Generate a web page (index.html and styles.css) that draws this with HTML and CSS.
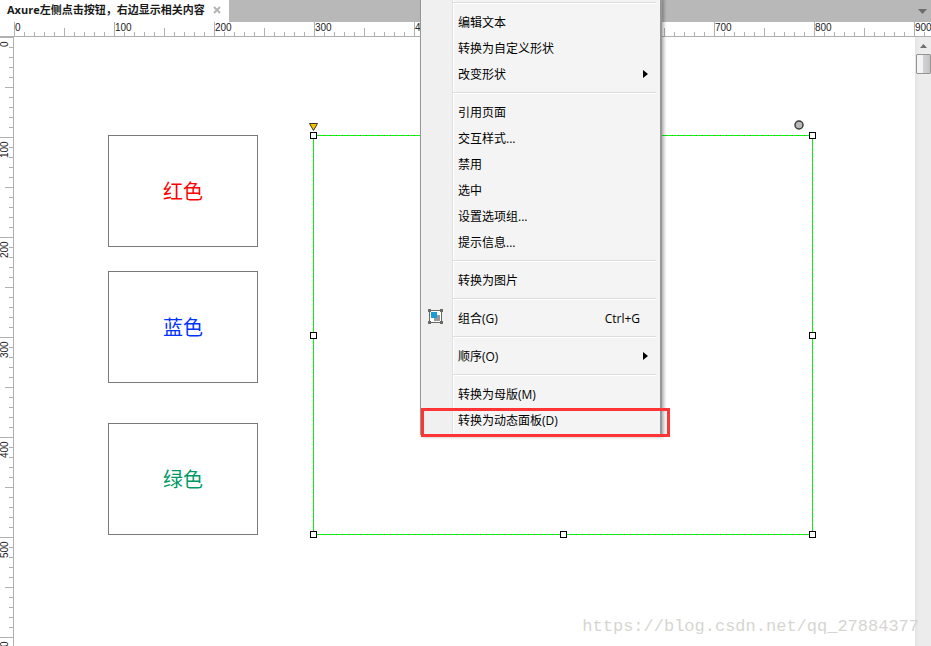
FILE: index.html
```html
<!DOCTYPE html>
<html lang="zh-CN">
<head>
<meta charset="utf-8">
<title>Axure左侧点击按钮，右边显示相关内容</title>
<link rel="stylesheet" href="styles.css">
</head>
<body>
<div class="app">
  <header class="tabs">
    <div class="tab">
      <span>Axure左侧点击按钮，右边显示相关内容</span>
      <button class="icon-button" aria-label="关闭">
        <svg width="8" height="8" viewBox="0 0 8 8"><path d="M1 1l6 6M7 1L1 7" stroke="#b5b5b5" stroke-width="2"/></svg>
      </button>
    </div>
    <button class="icon-button tab-list" aria-label="标签列表">
      <svg width="9" height="5" viewBox="0 0 9 5"><path d="M0 0h9L4.500 5z" fill="#6d6d6d"/></svg>
    </button>
  </header>
  <div class="ruler ruler-x">
    <span>0</span><span>100</span><span>200</span><span>300</span><span>400</span><span>500</span><span>600</span><span>700</span><span>800</span><span>900</span>
  </div>
  <div class="workspace">
    <div class="ruler ruler-y">
      <span>0</span><span>100</span><span>200</span><span>300</span><span>400</span><span>500</span><span>600</span>
    </div>
    <main class="canvas">
      <button class="shape shape-red">红色</button>
      <button class="shape shape-blue">蓝色</button>
      <button class="shape shape-green">绿色</button>
      <div class="selection">
        <i class="handle nw"></i><i class="handle n"></i><i class="handle ne"></i>
        <i class="handle w"></i><i class="handle e"></i>
        <i class="handle sw"></i><i class="handle s"></i><i class="handle se"></i>
        <svg class="corner-grip" width="9" height="8" viewBox="0 0 9 8"><path d="M.5.500h8L4.500 7.500z" fill="#f5c400" stroke="#3a3420"/></svg>
        <svg class="round-grip" width="10" height="10" viewBox="0 0 10 10"><circle cx="5" cy="5" r="4" fill="#b9b9b9" stroke="#3c3c3c" stroke-width="1.500"/></svg>
      </div>
    </main>
    <div class="scrollbar">
      <button class="icon-button scroll-up" aria-label="向上滚动">
        <svg width="7" height="4" viewBox="0 0 7 4"><path d="M0 4h7L3.500 0z" fill="#6f6f6f"/></svg>
      </button>
      <div class="thumb"></div>
    </div>
  </div>
  <p class="watermark">https://blog.csdn.net/qq_27884377</p>
  <div class="menu">
    <hr>
    <button>编辑文本</button>
    <button>转换为自定义形状</button>
    <button>改变形状<svg class="arrow" width="5" height="8" viewBox="0 0 5 8"><path d="M0 0v8l5-4z"/></svg></button>
    <hr>
    <button>引用页面</button>
    <button>交互样式...</button>
    <button>禁用</button>
    <button>选中</button>
    <button>设置选项组...</button>
    <button>提示信息...</button>
    <hr>
    <button>转换为图片</button>
    <hr>
    <button><svg class="group-icon" width="15" height="15" viewBox="0 0 15 15"><path d="M1.500 1.500h12v12h-12z" fill="#fff" stroke="#6b6b66"/><path d="M6 6h6v6H6z" fill="#999"/><path d="M3 3h6v6H3z" fill="#1b9bd8"/><path d="M0 0h3v3H0zM12 0h3v3h-3zM0 12h3v3H0zM12 12h3v3h-3z" fill="#6b6b66"/></svg>组合(G)<kbd>Ctrl+G</kbd></button>
    <hr>
    <button>顺序(O)<svg class="arrow" width="5" height="8" viewBox="0 0 5 8"><path d="M0 0v8l5-4z"/></svg></button>
    <hr>
    <button>转换为母版(M)</button>
    <button class="marked">转换为动态面板(D)</button>
  </div>
</div>
</body>
</html>
```
FILE: styles.css
```css
*, *::after { box-sizing: border-box; }

body {
  margin: 0;
  background: #fff;
  color: #000;
  font: 12px/16px "Open Sans", "Noto Sans CJK SC", sans-serif;
}

button {
  margin: 0;
  padding: 0;
  border: 0;
  background: none;
  color: inherit;
  font: inherit;
}

.app {
  position: relative;
  display: flex;
  flex-direction: column;
  height: 100vh;
  overflow: hidden;
}

.tabs {
  display: flex;
  justify-content: space-between;
  align-items: stretch;
  height: 22px;
  flex: none;
  background: #b8b8b8;
}

.tab {
  display: flex;
  align-items: center;
  gap: 8px;
  padding: 0 8px 2px 7px;
  background: #fff;
  color: #1a1a1a;
  font-size: 11px;
  font-weight: 700;
  white-space: nowrap;
}

.icon-button { display: flex; align-items: center; justify-content: center; }
.tab-list { padding: 0 4px; }

/* Rulers: a tick each 10px, a longer one at 50px, a full one at 100px */
.ruler {
  display: flex;
  flex: none;
  overflow: hidden;
  color: #222;
  font: 10px/10px "Liberation Sans", sans-serif;
}

.ruler span { flex: none; }

.ruler-x {
  height: 15px;
  padding-left: 14px;
  border-bottom: 1px solid #b0b0b0;
  background:
    repeating-linear-gradient(90deg, #b0b0b0 0 1px, transparent 1px 100px) 14px 0 / 100% 14px no-repeat,
    repeating-linear-gradient(90deg, #b0b0b0 0 1px, transparent 1px 50px) 14px 6px / 100% 8px no-repeat,
    repeating-linear-gradient(90deg, #b0b0b0 0 1px, transparent 1px 10px) 14px 10px / 100% 4px no-repeat;
}

.ruler-x span { width: 100px; padding-left: 1px; padding-top: 1px; }

.workspace { display: flex; flex: 1; min-height: 0; }

.ruler-y {
  flex-direction: column;
  width: 14px;
  border-right: 1px solid #b0b0b0;
  background:
    repeating-linear-gradient(180deg, #b0b0b0 0 1px, transparent 1px 100px) 0 0 / 13px 100% no-repeat,
    repeating-linear-gradient(180deg, #b0b0b0 0 1px, transparent 1px 50px) 5px 0 / 8px 100% no-repeat,
    repeating-linear-gradient(180deg, #b0b0b0 0 1px, transparent 1px 10px) 9px 0 / 4px 100% no-repeat;
}

.ruler-y span {
  width: 10px;
  height: 100px;
  padding-bottom: 4px;
  writing-mode: vertical-rl;
  transform: rotate(180deg);
  text-align: right;
}

.canvas { position: relative; flex: 1; overflow: hidden; }

.shape {
  position: absolute;
  left: 94px;
  width: 150px;
  height: 112px;
  padding-top: 2px;
  border: 1px solid #797979;
  background: #fff;
  font-size: 20px;
  line-height: 28px;
}

.shape-red { top: 98px; color: #f00; }
.shape-blue { top: 234px; color: #03f; }
.shape-green { top: 386px; color: #096; }

.selection {
  position: absolute;
  left: 299px;
  top: 98px;
  width: 500px;
  height: 400px;
  background:
    repeating-linear-gradient(90deg, #0f0 0 5px, #797979 5px 6px) 0 0 / 100% 1px no-repeat,
    repeating-linear-gradient(90deg, #0f0 0 5px, #797979 5px 6px) 0 100% / 100% 1px no-repeat,
    repeating-linear-gradient(180deg, #0f0 0 5px, #797979 5px 6px) 0 0 / 1px 100% no-repeat,
    repeating-linear-gradient(180deg, #0f0 0 5px, #797979 5px 6px) 100% 0 / 1px 100% no-repeat;
}

.handle {
  position: absolute;
  width: 7px;
  height: 7px;
  border: 1px solid #000;
  background: #fff;
}

.nw, .n, .ne { top: -3px; }
.sw, .s, .se { bottom: -3px; }
.nw, .w, .sw { left: -3px; }
.ne, .e, .se { right: -3px; }
.n, .s { left: calc(50% - 3px); }
.w, .e { top: calc(50% - 3px); }

.corner-grip { position: absolute; left: -4px; top: -12px; }
.round-grip { position: absolute; right: 9px; top: -15px; }

.scrollbar {
  display: flex;
  flex-direction: column;
  width: 16px;
  background: linear-gradient(90deg, #e4e4e4, #ececec 4px);
}

.scroll-up { height: 17px; }

.thumb {
  height: 20px;
  margin-left: 1px;
  border: 1px solid #949494;
  border-radius: 1px;
  background: linear-gradient(90deg, #f4f4f4 0 45%, #d2d2d4 50%, #c4c4c8);
}

.watermark {
  position: absolute;
  right: 12px;
  bottom: 7px;
  margin: 0;
  color: #d6d6d1;
  font: 17px/24px "Liberation Mono", monospace;
}

/* The menu is scrolled up past the top edge of the window */
.menu {
  position: absolute;
  left: 420px;
  top: -3px;
  display: flex;
  flex-direction: column;
  width: 242px;
  padding-bottom: 1px;
  border: 1px solid #979797;
  border-width: 0 2px 1px 1px;
  background: linear-gradient(90deg, #f0f0f0 31px, #e0e0e0 31px 32px, #fff 32px 33px, #f4f4f4 33px);
  box-shadow: 2px 2px 3px rgba(0, 0, 0, .3);
}

.menu hr {
  width: 203px;
  height: 2px;
  margin: 5px 4px 5px auto;
  border: 0;
  border-top: 1px solid #dedede;
  background: #fff;
}

.menu button {
  position: relative;
  display: flex;
  align-items: center;
  height: 26px;
  padding: 2px 12px 0 37px;
  white-space: nowrap;
}

.menu kbd { margin-left: auto; padding-right: 8px; font: inherit; }
.arrow { margin: 0 0 2px auto; }
.group-icon { position: absolute; left: 7px; top: 4px; }

.marked::after {
  content: "";
  position: absolute;
  left: 0;
  top: 1px;
  width: 249px;
  height: 29px;
  border: 3px solid #ff3535;
}
```
